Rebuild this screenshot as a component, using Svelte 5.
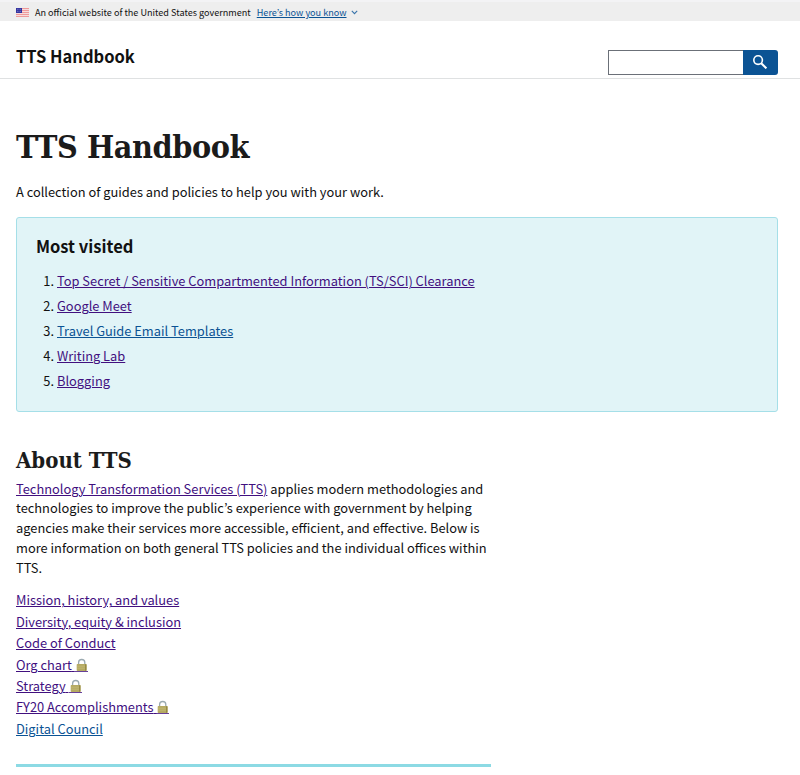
<script>
  const mostVisited = [
    { label: 'Top Secret / Sensitive Compartmented Information (TS/SCI) Clearance', visited: true },
    { label: 'Google Meet', visited: true },
    { label: 'Travel Guide Email Templates', visited: false },
    { label: 'Writing Lab', visited: true },
    { label: 'Blogging', visited: true }
  ];
  const aboutLinks = [
    { label: 'Mission, history, and values', visited: true },
    { label: 'Diversity, equity & inclusion', visited: true },
    { label: 'Code of Conduct', visited: true },
    { label: 'Org chart', visited: true, locked: true },
    { label: 'Strategy', visited: true, locked: true },
    { label: 'FY20 Accomplishments', visited: true, locked: true },
    { label: 'Digital Council', visited: false }
  ];
</script>

<div class="banner">
  <svg class="flag" width="13" height="9" viewBox="0 0 13 9" aria-hidden="true">
    <rect width="13" height="9" fill="#f7dcdc" />
    <path d="M0 .5h13M0 2.5h13M0 4.5h13M0 6.5h13M0 8.5h13" stroke="#ee9a9a" />
    <rect width="6" height="5" fill="#3434a0" />
    <path d="M1 1.3h4M1 3.4h4" stroke="#9c9cd8" stroke-width=".7" stroke-dasharray=".8 .8" />
  </svg>
  <span class="official">An official website of the United States government</span>
  <a class="how" href="#how">Here’s how you know</a>
  <svg class="chevron" width="7" height="5" viewBox="0 0 7 5" aria-hidden="true">
    <path d="M.8.9 3.5 3.6 6.2.9" fill="none" stroke="#3873aa" stroke-width="1.1" />
  </svg>
</div>

<header>
  <div class="brand">TTS Handbook</div>
  <form class="search">
    <input type="text" aria-label="Search" />
    <button type="button" aria-label="Search">
      <svg width="14" height="14" viewBox="0 0 14 14">
        <circle cx="5.1" cy="5.1" r="4.3" fill="none" stroke="#fff" stroke-width="1.6" />
        <path d="m8.2 8.2 5.2 5.2" stroke="#fff" stroke-width="2" />
      </svg>
    </button>
  </form>
</header>

<main>
  <h1>TTS Handbook</h1>
  <p class="intro">A collection of guides and policies to help you with your work.</p>

  <section class="card">
    <h2>Most visited</h2>
    <ol>
      {#each mostVisited as item, i}
        <li><span class="num">{i + 1}.</span><a href="#page" class:visited={item.visited}>{item.label}</a></li>
      {/each}
    </ol>
  </section>

  <section class="about">
    <h2>About TTS</h2>
    <p>
      <a href="#tts" class="visited">Technology Transformation Services (TTS)</a> applies modern methodologies and<br />
      technologies to improve the public’s experience with government by helping<br />
      agencies make their services more accessible, efficient, and effective. Below is<br />
      more information on both general TTS policies and the individual offices within<br />
      TTS.
    </p>
    <ul>
      {#each aboutLinks as link}
        <li>
          <a href="#page" class:visited={link.visited}>{link.label}{#if link.locked}&nbsp;<svg class="lock" width="13" height="14" viewBox="0 0 13 14" aria-hidden="true">
                <path d="M0 13.5h13" stroke="#41107f" stroke-opacity=".8" />
                <path d="M3.6 7V4.6a3.1 3.1 0 0 1 6.2 0V7" fill="none" stroke="#9aa9b0" stroke-width="1.3" />
                <rect x="1.7" y="6" width="10" height="7" rx=".8" fill="#b5aa62" />
                <path d="M2.2 8.2h9M2.2 10.2h9" stroke="#cbc17e" stroke-width=".6" />
                <path d="M10.7 6.2v6.6" stroke="#928642" stroke-width="1.2" />
              </svg>{/if}</a>
        </li>
      {/each}
    </ul>
  </section>
</main>

<style>
  :global(body) {
    background: #fff;
    color: #111;
    font: 12.85px/20px 'Noto Sans CJK KR', sans-serif;
  }
  h1, h2, p, ol, ul { margin: 0; padding: 0; }
  ol, ul { list-style: none; }
  a {
    color: #0b5394;
    text-decoration: underline;
    text-decoration-thickness: 1px;
    text-underline-offset: 1px;
  }
  a.visited { color: #41107f; }
  .banner {
    box-sizing: border-box;
    height: 21px;
    border-top: 2px solid #f3f3f5;
    background: #eee;
    display: flex;
    align-items: center;
    padding: 1px 16px 0;
    font-size: 9.1px;
    line-height: 16px;
  }
  .flag { margin-right: 6px; }
  .how { margin: 0 4px 0 6px; }
  header {
    box-sizing: border-box;
    height: 58px;
    border-bottom: 1px solid #dfe1e2;
    display: flex;
    justify-content: space-between;
    padding: 0 22px 0 16px;
  }
  .brand { font-size: 16.5px; font-weight: 700; line-height: 24px; padding-top: 23px; }
  .search { display: flex; height: 25px; margin-top: 29px; }
  .search input {
    box-sizing: border-box;
    width: 135px;
    height: 25px;
    border: 1px solid #6b7078;
    border-right: 0;
    border-radius: 0;
    padding: 0 6px;
    background: #fff;
  }
  .search button {
    width: 35px;
    height: 25px;
    border: 0;
    border-radius: 0 3px 3px 0;
    padding: 0 1px 1px 0;
    background: #0b5394;
    display: flex;
    align-items: center;
    justify-content: center;
  }
  main { padding: 0 22px 0 16px; }
  h1 {
    font: 700 32px/40px 'DejaVu Serif Condensed', 'DejaVu Serif', serif;
    letter-spacing: -0.4px;
    color: #1b1b1b;
    padding-top: 48px;
    white-space: nowrap;
  }
  .intro { padding-top: 15px; }
  .card {
    box-sizing: border-box;
    height: 195px;
    margin-top: 15px;
    border: 1px solid #a5dfe8;
    border-radius: 3px;
    background: #e1f4f7;
    padding: 16px 19px;
  }
  .card h2 { font-size: 16.5px; line-height: 24px; }
  .card ol { padding-top: 10px; }
  .card li { height: 25px; line-height: 25px; display: flex; }
  .num { width: 18px; padding-right: 3px; text-align: right; }
  .about { width: 475px; padding-top: 34px; border-bottom: 3px solid #8cdae4; white-space: nowrap; }
  .about h2 {
    font: 700 22px/28px 'DejaVu Serif Condensed', 'DejaVu Serif', serif;
    color: #1b1b1b;
    padding-bottom: 4.5px;
  }
  .about p { line-height: 19.8px; }
  .about ul { padding: 12px 0 24.5px; }
  .about li { height: 21.4px; line-height: 21.4px; }
  .lock { vertical-align: -2px; }
</style>
